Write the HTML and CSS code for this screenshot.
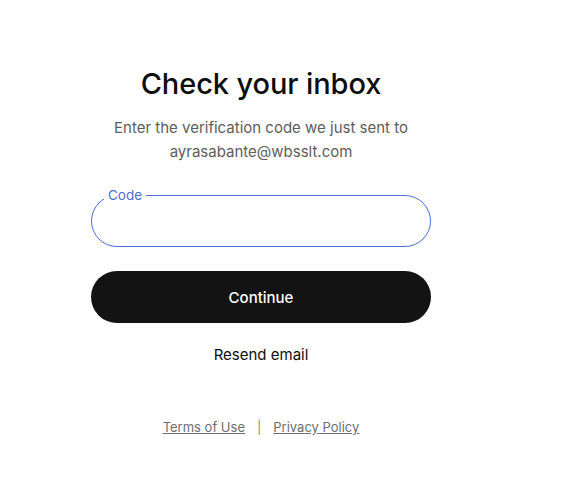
FILE: index.html
```html
<!DOCTYPE html>
<html lang="en">
<head>
  <meta charset="UTF-8">
  <meta name="viewport" content="width=device-width, initial-scale=1.0">
  <title>Check your inbox</title>
  <link rel="stylesheet" href="styles.css">
</head>
<body>
  <div class="page">
    <div class="panel">
      <h1>Check your inbox</h1>
      <p class="subtitle">Enter the verification code we just sent to ayrasabante@wbsslt.com</p>

      <div class="field">
        <label for="code" class="field-label">Code</label>
        <input type="text" id="code" class="field-input">
      </div>

      <button class="continue">Continue</button>
      <button class="resend">Resend email</button>

      <div class="footer">
        <a href="#">Terms of Use</a>
        <span class="sep">|</span>
        <a href="#">Privacy Policy</a>
      </div>
    </div>
  </div>
</body>
</html>
```

FILE: styles.css
```css
body {
  margin: 0;
  font-family: Inter, "Noto Sans", sans-serif;
  background: #fff;
  color: #0d0d0d;
}

.page {
  display: flex;
  justify-content: center;
  padding-right: 59px;
}

.panel {
  width: 340px;
  display: flex;
  flex-direction: column;
  align-items: center;
  padding-top: 64px;
}

h1 {
  margin: 0;
  font-size: 29px;
  font-weight: 500;
  line-height: 40px;
  letter-spacing: -0.1px;
}

.subtitle {
  margin: 12px 0 0;
  width: 310px;
  text-align: center;
  font-size: 15px;
  line-height: 24px;
  color: #5d5d5d;
}

.field {
  position: relative;
  width: 100%;
  margin-top: 31px;
}

.field-input {
  display: block;
  width: 100%;
  height: 52px;
  box-sizing: border-box;
  border: 1px solid #4b6fd6;
  border-radius: 26px;
  padding: 0 20px;
  font-size: 16px;
  outline: none;
}

.field-label {
  position: absolute;
  top: -9px;
  left: 13px;
  padding: 0 4px;
  background: #fff;
  font-size: 13.5px;
  line-height: 18px;
  color: #4b6fd6;
}

.continue {
  width: 100%;
  height: 52px;
  margin-top: 24px;
  border: none;
  border-radius: 26px;
  background: #131313;
  color: #fff;
  font-family: inherit;
  font-size: 15px;
  font-weight: 500;
  cursor: pointer;
}

.resend {
  margin-top: 20px;
  border: none;
  background: none;
  padding: 0;
  font-family: inherit;
  font-size: 15px;
  line-height: 24px;
  color: #0d0d0d;
  cursor: pointer;
}

.footer {
  margin-top: 50px;
  display: flex;
  gap: 12px;
  font-size: 13px;
  line-height: 20px;
  color: #6e6e6e;
}

.footer a {
  color: #6e6e6e;
  text-decoration: underline;
}

.sep {
  color: #8a8a8a;
}
```
